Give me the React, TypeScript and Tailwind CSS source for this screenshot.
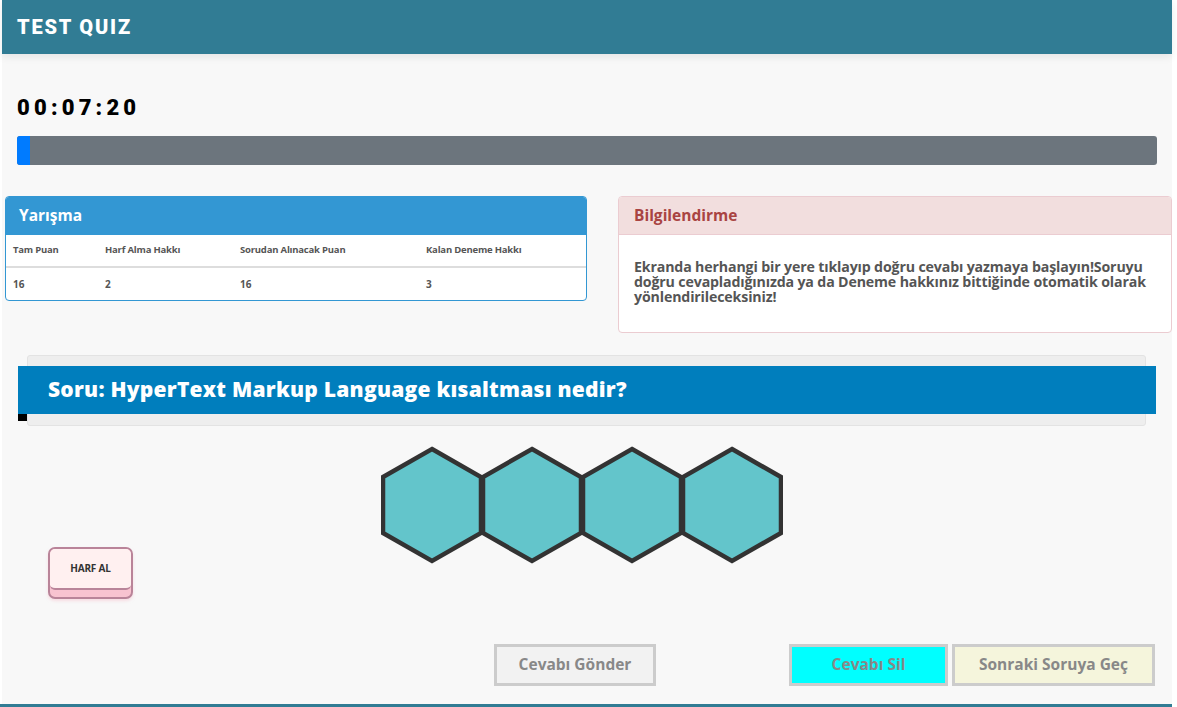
import React from "react";

const stats = [
  { label: "Tam Puan", value: "16" },
  { label: "Harf Alma Hakkı", value: "2" },
  { label: "Sorudan Alınacak Puan", value: "16" },
  { label: "Kalan Deneme Hakkı", value: "3" },
];

function Hexagons() {
  const centers = [51, 151, 251, 351];
  return (
    <svg width="402" height="118" viewBox="0 0 402 118">
      {centers.map((cx) => (
        <polygon
          key={cx}
          points={`${cx},3 ${cx + 49},31 ${cx + 49},87 ${cx},115 ${cx - 49},87 ${cx - 49},31`}
          fill="#63c5cb"
          stroke="#333333"
          strokeWidth="4.5"
        />
      ))}
    </svg>
  );
}

export default function App() {
  return (
    <div className="w-[1177px] h-[707px] bg-white overflow-hidden font-['Open_Sans','Liberation_Sans',sans-serif]">
      <div className="ml-[2px] w-[1170px] h-[704px] bg-[#f8f8f8]">
        <header className="h-[54px] bg-[#317c94] flex items-center px-[15px] shadow-[0_3px_8px_rgba(0,0,0,0.08)]">
          <h1 className="text-white text-[20px] font-black tracking-[1.8px] font-['Roboto',sans-serif]">TEST QUIZ</h1>
        </header>

        <div className="px-[15px] pt-[40px]">
          <div className="text-black text-[22px] font-black tracking-[4.2px] leading-[28px] font-['Roboto',sans-serif]">
            00:07:20
          </div>
          <div className="mt-[14px] h-[29px] bg-[#6c757d] rounded-[3px] overflow-hidden">
            <div className="h-full w-[13px] bg-[#007bff]" />
          </div>
        </div>

        <div className="flex items-start mt-[31px] pl-[3px] gap-[31px]">
          <div className="w-[582px] border border-[#3397d3] rounded-[4px] bg-white overflow-hidden">
            <div className="h-[38px] bg-[#3397d3] flex items-center px-[13px]">
              <span className="text-white text-[15.5px] font-bold">Yarışma</span>
            </div>
            <div className="grid grid-cols-[92px_135px_186px_1fr] pl-[7px] h-[33px] items-center border-b-2 border-[#dddddd]">
              {stats.map((s) => (
                <span key={s.label} className="text-[9.5px] font-bold text-[#555555] tracking-[-0.2px]">
                  {s.label}
                </span>
              ))}
            </div>
            <div className="grid grid-cols-[92px_135px_186px_1fr] pl-[7px] h-[32px] items-center">
              {stats.map((s) => (
                <span key={s.label} className="text-[10px] font-bold text-[#555555]">
                  {s.value}
                </span>
              ))}
            </div>
          </div>

          <div className="w-[554px] h-[137px] border border-[#ebccd1] rounded-[4px] bg-white overflow-hidden">
            <div className="h-[38px] bg-[#f2dede] border-b border-[#ebccd1] flex items-center px-[15px]">
              <span className="text-[#a94442] text-[15.5px] font-bold">Bilgilendirme</span>
            </div>
            <p className="pl-[15px] pr-[12px] pt-[24px] text-[14.2px] leading-[15px] font-bold text-[#555555] tracking-[-0.15px]">
              Ekranda herhangi bir yere tıklayıp doğru cevabı yazmaya başlayın!Soruyu doğru cevapladığınızda ya da
              Deneme hakkınız bittiğinde otomatik olarak yönlendirileceksiniz!
            </p>
          </div>
        </div>

        <div className="ml-[25px] w-[1119px] mt-[22px] h-[71px] bg-[#eeeeee] border border-[#e3e3e3] rounded-[3px]">
          <div className="-ml-[10px] w-[1138px] mt-[10px] h-[48px] bg-[#007ebd] flex items-center pl-[30px]">
            <span className="text-white text-[21px] font-extrabold tracking-[0.25px]">
              Soru: HyperText Markup Language kısaltması nedir?
            </span>
          </div>
          <div className="-ml-[10px] w-[9px] h-[7px] bg-black" />
        </div>

        <div className="flex items-start mt-[20px]">
          <div className="ml-[46px] mt-[101px] w-[85px] h-[52px] rounded-[7px] bg-[#f8c3d0] border-2 border-[#b98499] shadow-[0_2px_3px_rgba(248,195,208,0.5)]">
            <div className="h-[41px] rounded-[5px] bg-[#fff0f0] border-b-2 border-[#b98499] flex items-center justify-center">
              <span className="text-[10px] font-bold text-[#333333] tracking-[-0.2px]">HARF AL</span>
            </div>
          </div>
          <div className="ml-[248px]">
            <Hexagons />
          </div>
        </div>

        <div className="flex items-center mt-[45px]">
          <button className="ml-[492px] w-[162px] h-[42px] border-[3px] border-[#cccccc] bg-[#f2f2f2] text-[#888888] text-[15.5px] font-bold">
            Cevabı Gönder
          </button>
          <button className="ml-[133px] w-[159px] h-[42px] border-[3px] border-[#cccccc] bg-[#00ffff] text-[#888888] text-[15.5px] font-bold">
            Cevabı Sil
          </button>
          <button className="ml-[4px] w-[203px] h-[42px] border-[3px] border-[#cccccc] bg-[#f5f5dc] text-[#888888] text-[15.5px] font-bold">
            Sonraki Soruya Geç
          </button>
        </div>
      </div>
      <div className="w-[1172px] h-[3px] bg-[#317c94]" />
    </div>
  );
}
